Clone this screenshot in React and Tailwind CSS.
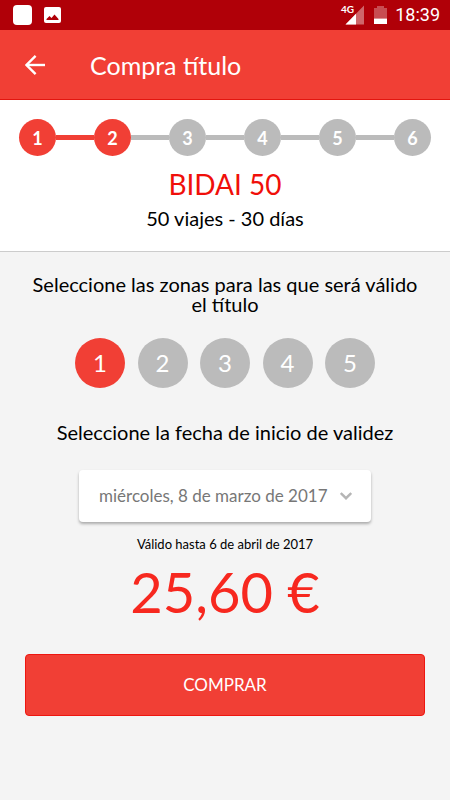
import { useState } from "react";

const steps = [1, 2, 3, 4, 5, 6];
const zones = [1, 2, 3, 4, 5];
const currentStep = 2;

const StatusBar = () => {
  return (
    <div className="flex h-[30px] items-center justify-between bg-[#b00008] pl-[13px] pr-[10px]">
      <div className="flex items-center gap-3">
        <div className="h-5 w-[19px] rounded-[4px] bg-white" />
        <svg width="17" height="16" viewBox="0 0 17 16">
          <rect width="17" height="16" rx="2" fill="#fff" />
          <path d="M2.5 13 L2.5 12 L5.5 9 L7.5 11 L10.5 7.5 L14.5 12 V13 Z" fill="#b00008" />
        </svg>
      </div>
      <div className="flex items-center">
        <svg width="23" height="20" viewBox="0 0 23 20" className="mr-[10px] overflow-visible">
          <path d="M23 0.5 V19.5 H4.5 Z" fill="#fff" fillOpacity="0.4" />
          <path d="M15 8.7 V19.5 H4.5 Z" fill="#fff" />
          <text x="0" y="8" fontSize="10" fontWeight="700" fill="#fff" fontFamily="Lato, sans-serif">
            4G
          </text>
        </svg>
        <svg width="13" height="18" viewBox="0 0 13 18" className="mr-2">
          <path d="M3 0 H10 V2 H13 V12.5 H0 V2 H3 Z" fill="#fff" fillOpacity="0.3" />
          <path d="M0 12.5 H13 V18 H0 Z" fill="#fff" />
        </svg>
        <span className="font-[Roboto,sans-serif] text-lg leading-none text-white">18:39</span>
      </div>
    </div>
  );
};

const AppBar = () => {
  return (
    <header className="flex h-[70px] items-center border-b border-[#e3150f] bg-[#f13f35] px-[25px] pt-px text-white">
      <button type="button" aria-label="Volver" className="mr-[45px]">
        <svg width="20" height="20" viewBox="0 0 20 20" fill="none" stroke="#fff" strokeWidth="2.4">
          <path d="M20 10 H1.8" />
          <path d="M10.6 0.9 L1.5 10 L10.6 19.1" />
        </svg>
      </button>
      <h1 className="text-[25px] leading-8">Compra título</h1>
    </header>
  );
};

const Steps = () => {
  return (
    <ol className="flex items-center">
      {steps.map((step) => {
        const color = step <= currentStep ? "bg-[#f13f35]" : "bg-[#bbbbbb]";
        return (
          <li key={step} className={step === 1 ? "flex items-center" : "flex flex-1 items-center"}>
            {step > 1 && <span className={`h-[5px] flex-1 ${color}`} />}
            <span
              className={`flex size-[37px] items-center justify-center rounded-full text-lg font-bold text-white ${color}`}
            >
              {step}
            </span>
          </li>
        );
      })}
    </ol>
  );
};

const App = () => {
  const [zone, setZone] = useState(1);

  return (
    <div className="min-h-screen bg-[#f4f4f4] font-[Lato,sans-serif] text-black">
      <StatusBar />
      <AppBar />
      <section className="border-b border-[#cccccc] bg-white px-[19px] py-[19px] text-center">
        <Steps />
        <h2 className="mt-3 text-[28px] leading-8 text-[#f00f0a]">BIDAI 50</h2>
        <p className="mt-1 text-xl leading-7">50 viajes - 30 días</p>
      </section>
      <main className="flex flex-col items-center px-[25px] pt-[22px] text-center">
        <p className="text-xl leading-5">Seleccione las zonas para las que será válido el título</p>
        <div className="mt-6 flex w-[300px] justify-between">
          {zones.map((z) => (
            <button
              key={z}
              type="button"
              aria-pressed={z === zone}
              onClick={() => setZone(z)}
              className={`size-[50px] rounded-full text-2xl text-white ${
                z === zone ? "bg-[#f13f35]" : "bg-[#bbbbbb]"
              }`}
            >
              {z}
            </button>
          ))}
        </div>
        <label htmlFor="fecha" className="mt-[30px] text-xl leading-7">
          Seleccione la fecha de inicio de validez
        </label>
        <div className="relative mt-6 w-[292px]">
          <select
            id="fecha"
            className="h-[52px] w-full appearance-none rounded bg-white pl-5 text-[17px] text-[#777777] shadow-[0_2px_3px_rgba(0,0,0,0.3)]"
          >
            <option>miércoles, 8 de marzo de 2017</option>
          </select>
          <svg
            width="12"
            height="8"
            viewBox="0 0 12 8"
            fill="none"
            stroke="#b5b5b5"
            strokeWidth="2.4"
            className="pointer-events-none absolute top-[22px] right-[19px]"
          >
            <path d="M0.8 1 L6 6.2 L11.2 1" />
          </svg>
        </div>
        <p className="mt-3 text-[13px] leading-5">Válido hasta 6 de abril de 2017</p>
        <p className="mt-2 text-[56px] leading-[60px] text-[#f7281f]">25,60 €</p>
        <button
          type="button"
          className="mt-8 h-[62px] w-full rounded border border-[#ee1610] bg-[#f13f35] text-[17px] text-white"
        >
          COMPRAR
        </button>
      </main>
    </div>
  );
};

export default App;
